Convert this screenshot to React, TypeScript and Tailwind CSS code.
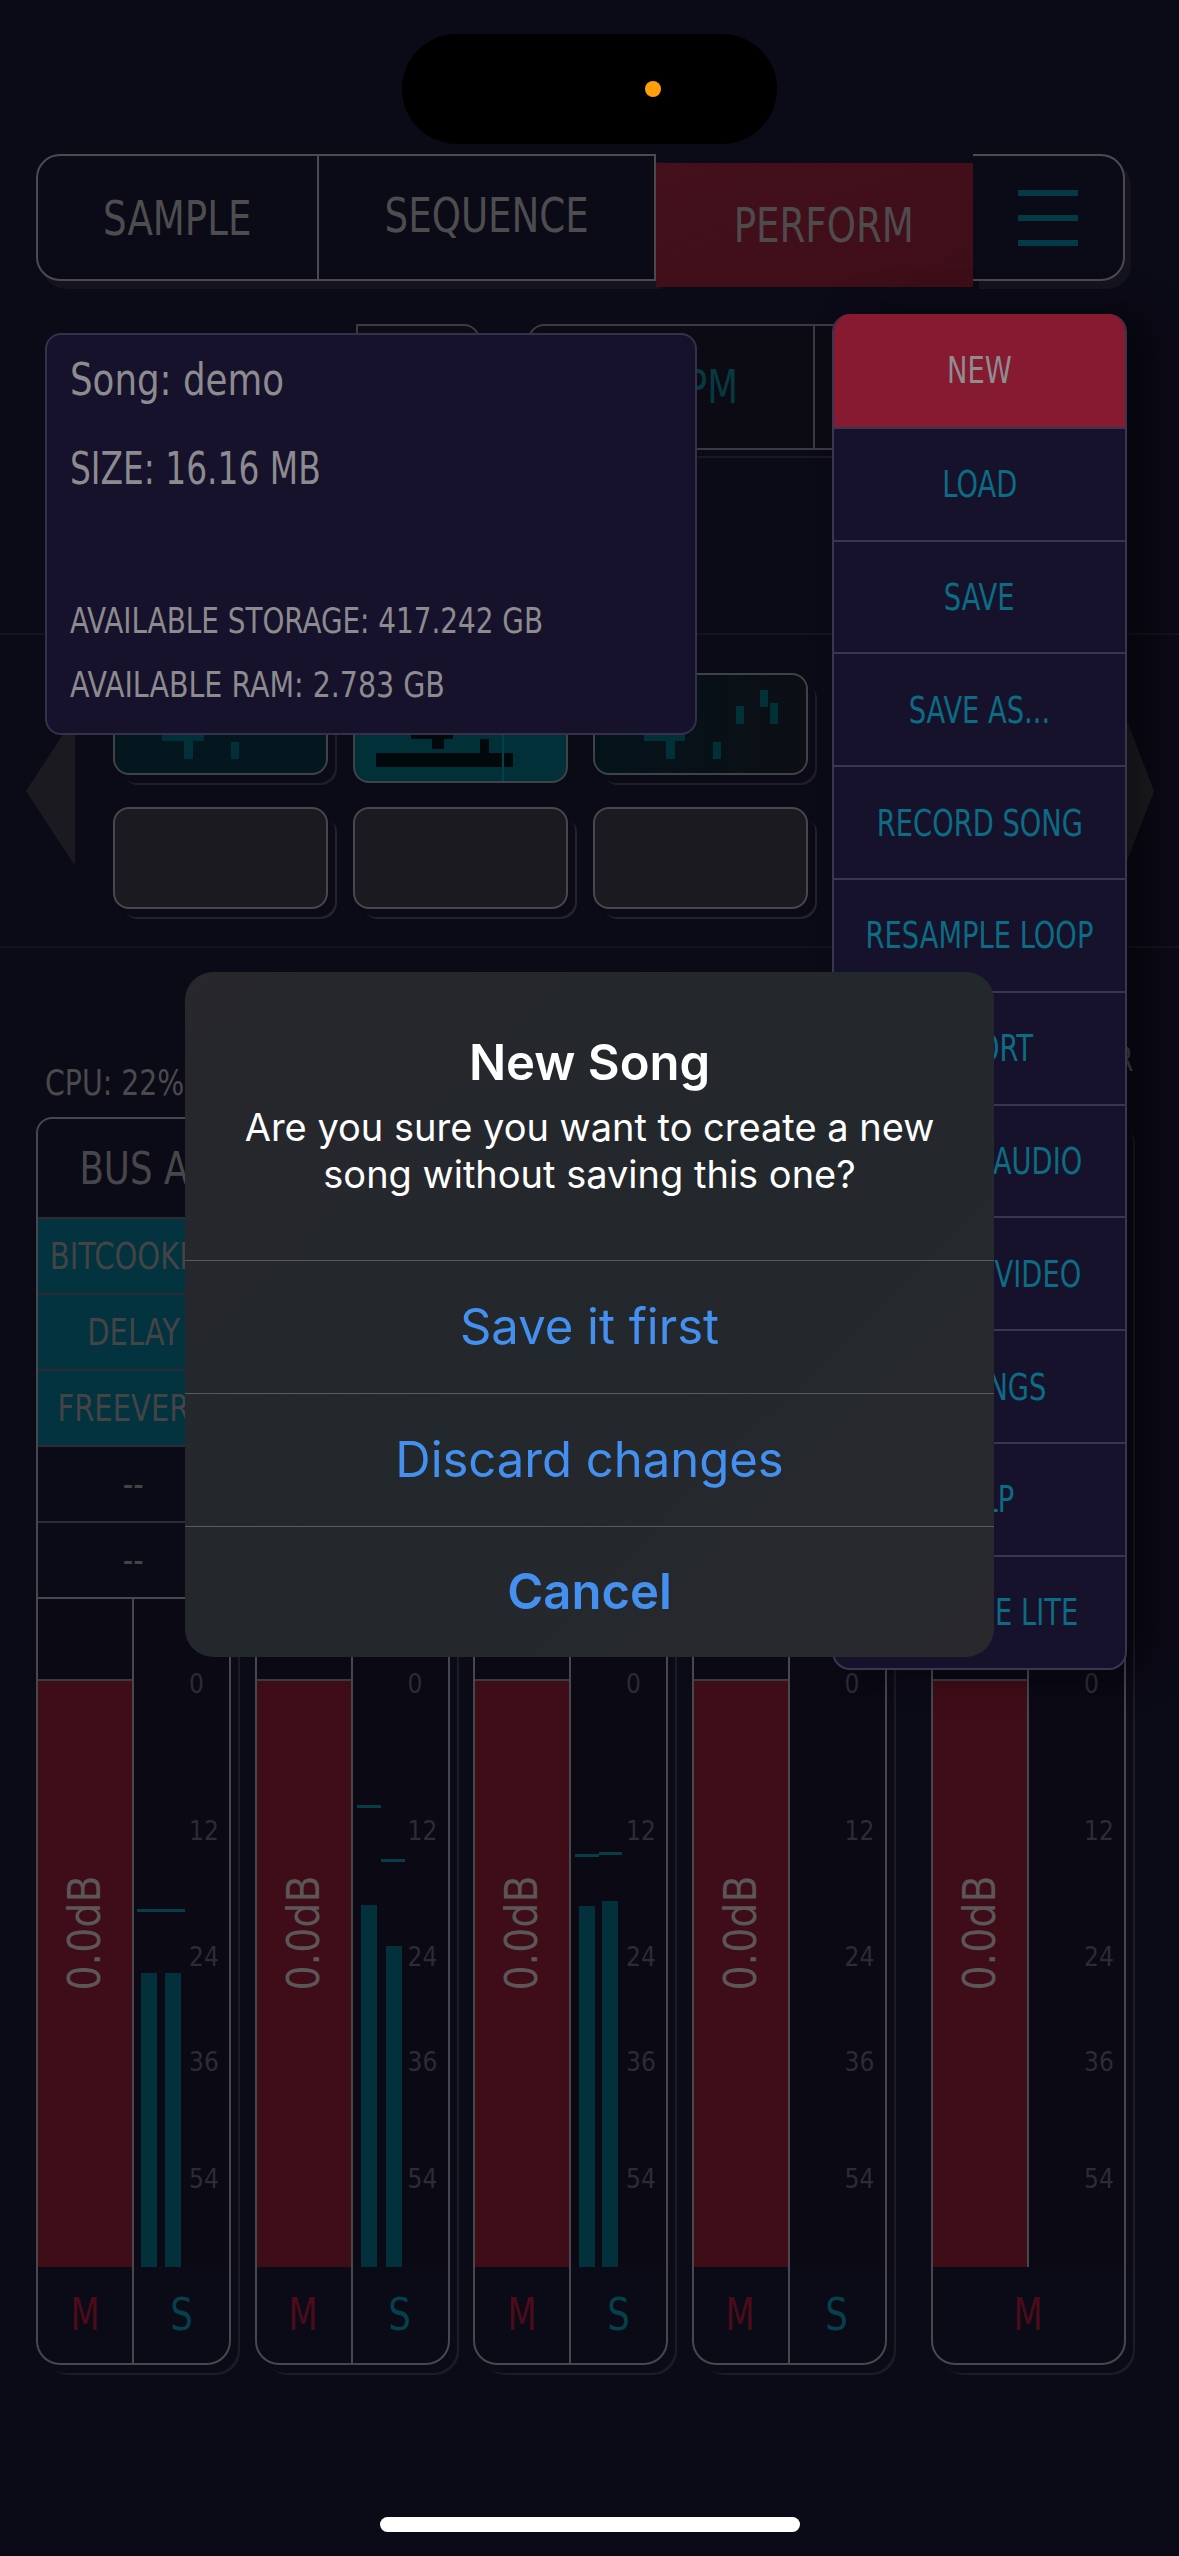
import React from "react";

const COND = "font-['DejaVu_Sans_Condensed','DejaVu_Sans',sans-serif]";
const INTER = "font-['Inter','Noto_Sans',sans-serif]";

type Bar = { l: number; top: number };
type Peak = { l: number; w: number; top: number };
type StripData = { id: string; name: string; fx: string[]; bars: Bar[]; peaks: Peak[]; master?: boolean };

const STRIPS: StripData[] = [
  {
    id: "a",
    name: "BUS A",
    fx: ["BITCOOKER", "DELAY", "FREEVERB", "--", "--"],
    bars: [
      { l: 7, top: 374 },
      { l: 31, top: 374 },
    ],
    peaks: [{ l: 3, w: 48, top: 310 }],
  },
  {
    id: "b",
    name: "",
    fx: ["", "", "", "", ""],
    bars: [
      { l: 8, top: 306 },
      { l: 33, top: 347 },
    ],
    peaks: [
      { l: 4, w: 24, top: 206 },
      { l: 28, w: 24, top: 260 },
    ],
  },
  {
    id: "c",
    name: "",
    fx: ["", "", "", "", ""],
    bars: [
      { l: 8, top: 307 },
      { l: 31, top: 302 },
    ],
    peaks: [
      { l: 4, w: 24, top: 255 },
      { l: 28, w: 23, top: 253 },
    ],
  },
  { id: "d", name: "", fx: ["", "", "", "", ""], bars: [], peaks: [] },
  { id: "m", name: "", fx: ["", "", "", "", ""], bars: [], peaks: [], master: true },
];

const SCALE = [
  { v: "0", top: 72 },
  { v: "12", top: 219 },
  { v: "24", top: 345 },
  { v: "36", top: 450 },
  { v: "54", top: 567 },
];

const MENU = [
  "NEW",
  "LOAD",
  "SAVE",
  "SAVE AS...",
  "RECORD SONG",
  "RESAMPLE LOOP",
  "EXPORT",
  "EXPORT AUDIO",
  "EXPORT VIDEO",
  "SETTINGS",
  "HELP",
  "UPGRADE LITE",
];

function Strip({ s }: { s: StripData }) {
  return (
    <div className="flex h-[1248px] w-[195px] shrink-0 flex-col rounded-t-[16px] rounded-b-[24px] border-2 border-[#48474d] bg-[#0b0a17] shadow-[7px_8px_0_0_#0b0a17,9px_10px_0_0_#1c1b26]">
      <div className="flex h-[98px] items-center justify-center">
        {s.name && (
          <span className={`${COND} inline-block scale-x-[0.88] whitespace-nowrap text-[45px] leading-none text-[#47474a]`}>
            {s.name}
          </span>
        )}
      </div>
      {s.fx.map((f, i) => (
        <div
          key={i}
          className={`flex h-[76px] items-center justify-center overflow-hidden border-t-2 border-[#2c2b35] ${
            f === "--" || f === "" ? "bg-[#0b0a17]" : "bg-[#02333e]"
          }`}
        >
          {f && (
            <span className={`${COND} inline-block scale-x-[0.85] whitespace-nowrap text-[38px] leading-none text-[#444447]`}>
              {f}
            </span>
          )}
        </div>
      ))}
      <div className="flex h-[670px] border-t-2 border-[#48474d]">
        <div className="flex w-[96px] flex-col border-r-2 border-[#48474d]">
          <div className="h-[82px] border-b-2 border-[#3a3940] bg-[#0a0914]" />
          <div className="flex flex-1 items-center justify-center bg-[#3f0d17] pb-[82px]">
            <span className={`${COND} inline-block -rotate-90 whitespace-nowrap text-[44px] leading-none text-[#5b5658]`}>
              0.0dB
            </span>
          </div>
        </div>
        <div className="relative flex-1 bg-[#0a0914]">
          {s.bars.map((b, i) => (
            <div
              key={"b" + i}
              className="absolute bottom-0 w-[16px] bg-[#02313c]"
              style={{ left: b.l, top: b.top }}
            />
          ))}
          {s.peaks.map((p, i) => (
            <div
              key={"p" + i}
              className="absolute h-[3px] bg-[#053e49]"
              style={{ left: p.l, width: p.w, top: p.top }}
            />
          ))}
          {SCALE.map((n) => (
            <span
              key={n.v}
              className={`${COND} absolute left-[55px] text-[26px] leading-none text-[#2d2c36]`}
              style={{ top: n.top }}
            >
              {n.v}
            </span>
          ))}
        </div>
      </div>
      <div className="flex flex-1">
        {s.master ? (
          <div className="flex flex-1 items-center justify-center">
            <span className={`${COND} inline-block scale-x-[0.85] text-[44px] leading-none text-[#4b0c18]`}>M</span>
          </div>
        ) : (
          <>
            <div className="flex w-[96px] items-center justify-center border-r-2 border-[#48474d]">
              <span className={`${COND} inline-block scale-x-[0.85] text-[44px] leading-none text-[#4b0c18]`}>M</span>
            </div>
            <div className="flex flex-1 items-center justify-center">
              <span className={`${COND} inline-block scale-x-[0.9] text-[44px] leading-none text-[#05404b]`}>S</span>
            </div>
          </>
        )}
      </div>
    </div>
  );
}

function Tick({ x, y, w, h, c }: { x: number; y: number; w: number; h: number; c: string }) {
  return <div className="absolute" style={{ left: x, top: y, width: w, height: h, background: c }} />;
}

function PadsSection() {
  const teal = "#023039";
  return (
    <div className="flex h-[315px] items-center border-y-2 border-[#15141e]">
      <svg className="ml-[26px] h-[150px] w-[49px] shrink-0" viewBox="0 0 49 150">
        <polygon points="49,0 0,75 49,150" fill="#1a1a20" />
      </svg>
      <div className="ml-[38px] grid shrink-0 grid-cols-[repeat(4,215px)] gap-x-[25px] gap-y-[24px]">
        {/* row 1 */}
        <div className="relative h-[102px] rounded-[16px] border-2 border-[#3f4246] bg-[#04171e] shadow-[7px_8px_0_0_#0b0a17,9px_10px_0_0_#1f1e28]">
          <Tick x={47} y={56} w={42} h={10} c={teal} />
          <Tick x={69} y={66} w={9} h={18} c={teal} />
          <Tick x={116} y={67} w={8} h={17} c={teal} />
        </div>
        <div className="relative mt-[8px] h-[102px] rounded-[16px] border-2 border-[#3f4246] bg-[#023039]">
          <Tick x={56} y={48} w={42} h={8} c="#02090c" />
          <Tick x={77} y={56} w={12} h={10} c="#02090c" />
          <Tick x={125} y={56} w={9} h={14} c="#02090c" />
          <Tick x={21} y={70} w={137} h={14} c="#02090c" />
          <Tick x={147} y={20} w={2} h={78} c="#03404a" />
        </div>
        <div className="relative h-[102px] rounded-[16px] border-2 border-[#3f4246] bg-[linear-gradient(90deg,#04131a,#0c0f15)] shadow-[7px_8px_0_0_#0b0a17,9px_10px_0_0_#1f1e28]">
          <Tick x={49} y={56} w={41} h={10} c={teal} />
          <Tick x={71} y={66} w={9} h={18} c={teal} />
          <Tick x={118} y={67} w={8} h={17} c={teal} />
          <Tick x={141} y={31} w={8} h={18} c={teal} />
          <Tick x={165} y={15} w={8} h={17} c={teal} />
          <Tick x={175} y={28} w={8} h={21} c={teal} />
        </div>
        <div className="relative h-[102px] rounded-[16px] border-2 border-[#3f4246] bg-[#04171e]" />
        {/* row 2 */}
        {[0, 1, 2, 3].map((i) => (
          <div
            key={i}
            className="h-[102px] rounded-[16px] border-2 border-[#48474c] bg-[#1b1a21] shadow-[7px_8px_0_0_#0b0a17,9px_10px_0_0_#24232c]"
          />
        ))}
      </div>
      <svg className="ml-[77px] h-[150px] w-[29px] shrink-0" viewBox="0 0 29 150">
        <polygon points="0,0 29,75 0,150" fill="#1f1f24" />
      </svg>
    </div>
  );
}

export default function App() {
  return (
    <div className="relative h-[2556px] w-[1179px] overflow-hidden bg-[#0b0a17]">
      {/* Dynamic island */}
      <div className="flex justify-center pt-[34px]">
        <div className="relative h-[110px] w-[375px] rounded-full bg-black">
          <div className="absolute left-[243px] top-[47px] h-[16px] w-[16px] rounded-full bg-[#ff9f0a]" />
        </div>
      </div>

      {/* Tab bar */}
      <div className="ml-[36px] mt-[10px] flex h-[136px] w-[1089px] items-start">
        <div className="flex h-[127px] w-[620px] rounded-l-[24px] border-2 border-[#4b4b4f] bg-[#0b0a17] shadow-[6px_8px_0_0_#15141e]">
          <div className="flex w-[281px] items-center justify-center border-r-2 border-[#4b4b4f]">
            <span className={`${COND} inline-block scale-x-[0.86] text-[48px] leading-none text-[#4d4d4f]`}>SAMPLE</span>
          </div>
          <div className="flex flex-1 items-center justify-center pb-[5px]">
            <span className={`${COND} inline-block scale-x-[0.86] text-[48px] leading-none text-[#4d4d4f]`}>SEQUENCE</span>
          </div>
        </div>
        <div className="mt-[9px] flex h-[124px] w-[317px] items-center justify-center bg-[linear-gradient(160deg,#43101b,#3e0e18)] pl-[18px]">
          <span className={`${COND} inline-block scale-x-[0.86] text-[48px] leading-none text-[#4f4b4d]`}>PERFORM</span>
        </div>
        <div className="flex h-[127px] w-[152px] flex-col items-center justify-center gap-[19px] rounded-r-[24px] border-2 border-l-0 border-[#4b4b4f] bg-[#0b0a17] shadow-[6px_8px_0_0_#15141e]">
          <div className="h-[6px] w-[60px] bg-[#033a45]" />
          <div className="h-[6px] w-[60px] bg-[#033a45]" />
          <div className="h-[6px] w-[60px] bg-[#033a45]" />
        </div>
      </div>

      {/* Transport area */}
      <div className="h-[343px] pt-[34px]">
        <div className="flex">
          <div className="ml-[356px] h-[126px] w-[124px] rounded-tr-[16px] border-2 border-[#3b3a42] bg-[#0d0c16]" />
          <div className="ml-[48px] flex h-[126px] w-[597px] rounded-tl-[16px] border-2 border-[#3b3a42] bg-[#0c0b14]">
            <div className="flex w-[285px] items-center justify-center border-r-2 border-[#3b3a42]">
              <span className={`${COND} inline-block scale-x-[0.86] whitespace-nowrap text-[46px] leading-none text-[#063a42]`}>
                90 BPM
              </span>
            </div>
            <div className="flex-1" />
          </div>
        </div>
        <div className="ml-[356px] mt-[6px] w-[769px] border-t-2 border-[#1a1922]" />
      </div>

      {/* Pads */}
      <PadsSection />

      {/* Mixer */}
      <div className="flex h-[169px] items-start justify-between pl-[45px] pr-[46px]">
        <span className={`${COND} mt-[118px] inline-block origin-left scale-x-[0.9] text-[35px] leading-none text-[#4a4a4c]`}>
          CPU: 22%
        </span>
        <span className={`${COND} mt-[95px] inline-block origin-right scale-x-[0.88] text-[33px] leading-none text-[#4a4a4c]`}>
          MASTER
        </span>
      </div>
      <div className="flex gap-[23.5px] pl-[36px]">
        {STRIPS.map((s, i) => (
          <div key={s.id} className={i === 4 ? "ml-[21px]" : ""}>
            <Strip s={s} />
          </div>
        ))}
      </div>

      {/* Song info panel (popover) */}
      <div className="absolute left-[45px] top-[333px] h-[402px] w-[652px] rounded-[16px] border-2 border-[#36314a] bg-[#17122b] pl-[23px] pt-[22px]">
        <div className={`${COND} origin-left scale-x-[0.88] whitespace-nowrap text-[45px] leading-none text-[#8c8b8f]`}>
          Song: demo
        </div>
        <div className={`${COND} mt-[45px] origin-left scale-x-[0.83] whitespace-nowrap text-[44px] leading-none text-[#8c8b8f]`}>
          SIZE: 16.16 MB
        </div>
        <div className={`${COND} mt-[112px] origin-left scale-x-[0.86] whitespace-nowrap text-[36px] leading-none text-[#8c8b8f]`}>
          AVAILABLE STORAGE: 417.242 GB
        </div>
        <div className={`${COND} mt-[28px] origin-left scale-x-[0.88] whitespace-nowrap text-[36px] leading-none text-[#8c8b8f]`}>
          AVAILABLE RAM: 2.783 GB
        </div>
      </div>

      {/* Menu (dropdown) */}
      <div className="absolute left-[832px] top-[314px] w-[295px] overflow-hidden rounded-[18px] border-2 border-t-0 border-[#3a3550] bg-[#17122b] shadow-[24px_0_40px_rgba(0,0,0,0.45)]">
        {MENU.map((m, i) => (
          <div
            key={m}
            className={`flex h-[112.8px] items-center justify-center ${
              i === 0 ? "bg-[#861a30]" : "border-t-2 border-[#3a3550]"
            }`}
          >
            <span
              className={`${COND} inline-block scale-x-[0.8] whitespace-nowrap text-[38px] leading-none ${
                i === 0 ? "text-[#8e8d90]" : "text-[#0b6c83]"
              }`}
            >
              {m}
            </span>
          </div>
        ))}
      </div>

      {/* Alert */}
      <div className="absolute left-[185px] top-[972px] flex h-[685px] w-[809px] flex-col overflow-hidden rounded-[28px] bg-[linear-gradient(135deg,#27272c,#23282c_50%,#28282d)]">
        <div className="flex h-[288px] flex-col items-center pt-[66px]">
          <div className={`${INTER} text-[49px] font-semibold leading-none text-white`}>New Song</div>
          <div className={`${INTER} mt-[17px] text-center text-[38px] leading-[47px] text-white`}>
            Are you sure you want to create a new
            <br />
            song without saving this one?
          </div>
        </div>
        <div className={`${INTER} flex h-[133px] items-center justify-center border-t border-[#565a61] text-[49px] text-[#4490f0]`}>
          Save it first
        </div>
        <div className={`${INTER} flex h-[133px] items-center justify-center border-t border-[#565a61] text-[49px] text-[#4490f0]`}>
          Discard changes
        </div>
        <div className={`${INTER} flex flex-1 items-center justify-center border-t border-[#565a61] text-[49px] font-semibold text-[#4490f0]`}>
          Cancel
        </div>
      </div>

      {/* Home indicator */}
      <div className="absolute left-[380px] top-[2517px] h-[15px] w-[420px] rounded-full bg-white" />
    </div>
  );
}
